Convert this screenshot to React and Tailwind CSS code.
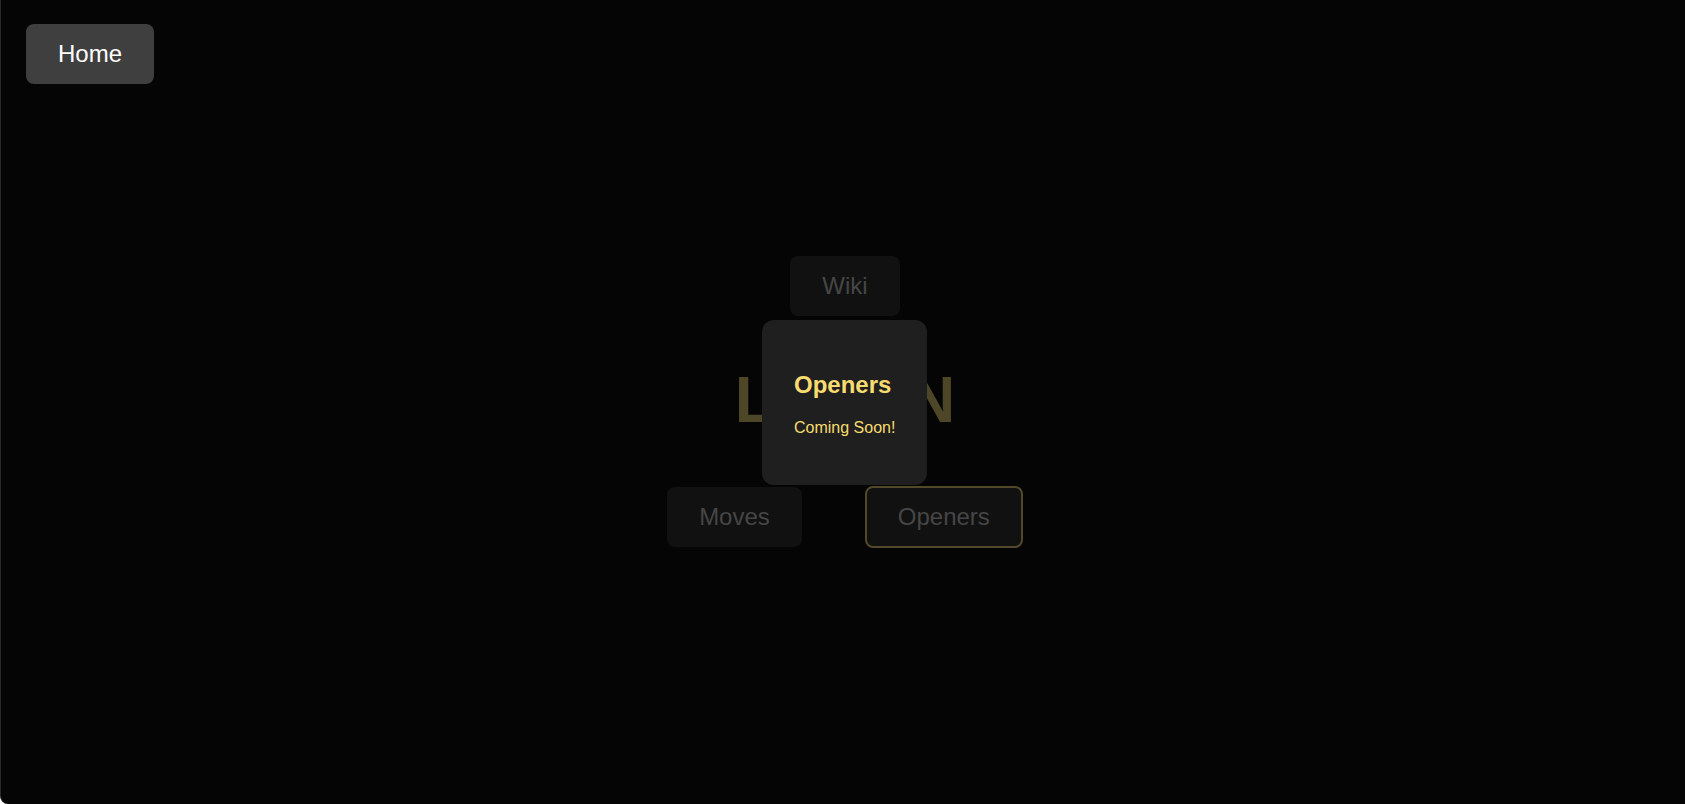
import React from 'react'

const navBtn = "rounded-lg bg-[#111111] px-8 py-4 text-[24px] leading-[28px] text-[#464646]"

const App = () => {
    return (
        <div className="relative h-screen w-full overflow-hidden rounded-bl-lg border-l border-[#2a2a2a] bg-[#050505] font-['Liberation_Sans',Arial,sans-serif]">
            <button className="absolute left-[25px] top-6 rounded-lg bg-[#3f3f3f] px-8 py-4 text-[24px] leading-[28px] text-white">
                Home
            </button>

            <div className="flex h-full flex-col items-center justify-center pl-[4px]">
                <button className={navBtn}>Wiki</button>
                <h1 className="mt-[52px] mb-[54px] text-[64px] font-bold leading-[64px] text-[#4d4627]">
                    LEARN
                </h1>
                <div className="flex items-center gap-[63px]">
                    <button className={navBtn}>Moves</button>
                    <button className="rounded-lg border-2 border-[#54482a] bg-[#111111] px-[31px] py-[15px] text-[24px] leading-[28px] text-[#464646]">
                        Openers
                    </button>
                </div>
            </div>

            <div className="absolute inset-0 flex items-center justify-center pl-[3px]">
                <div className="flex h-[165px] w-[165px] flex-col justify-center gap-[21px] rounded-xl bg-[#1f1f1f] pl-8 pr-2 pt-1">
                    <h2 className="whitespace-nowrap text-[24px] font-bold leading-[27px] text-[#f7dc6f]">Openers</h2>
                    <p className="whitespace-nowrap text-[16px] leading-[18px] text-[#f7dc6f]">Coming Soon!</p>
                </div>
            </div>
        </div>
    )
}

export default App
